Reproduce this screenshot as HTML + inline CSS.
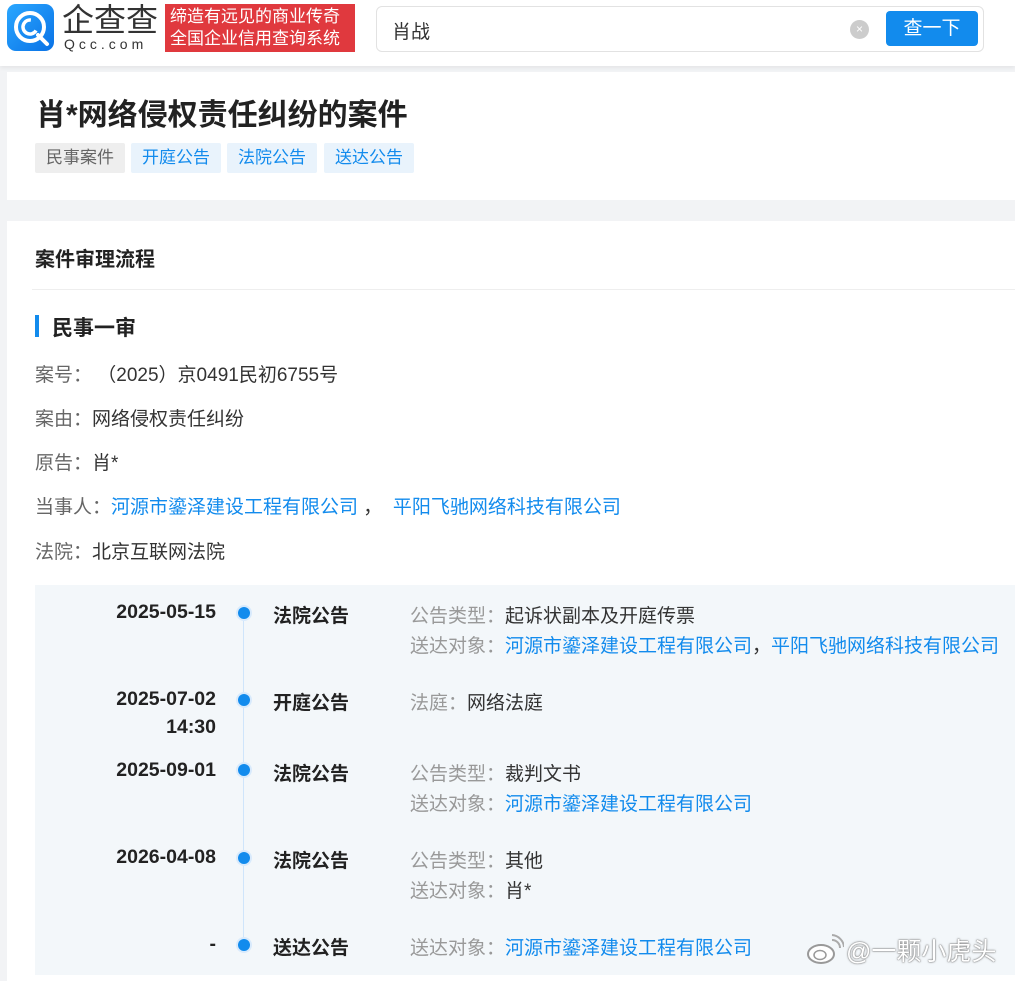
<!DOCTYPE html>
<html><head><meta charset="utf-8"><style>
*{margin:0;padding:0;box-sizing:border-box}
body{width:1015px;height:975px;overflow:hidden;background:#f2f3f5;font-family:"Liberation Sans","Noto Sans CJK SC",sans-serif;position:relative;color:#333}
.a{position:absolute;white-space:nowrap}
.hdr{left:0;top:0;width:1015px;height:66px;background:#fff;box-shadow:0 2px 4px rgba(0,0,0,.06)}
.card{background:#fff;left:7px;width:1008px}
.tag{top:143px;height:30px;line-height:30px;font-size:17px;padding:0 11px;border-radius:2px;color:#128bed;background:#e9f3fc}
.lbl{font-size:19px;color:#333}
.lbl span.k{color:#666}
.blue{color:#128bed}
.date{font-size:19.5px;font-weight:bold;color:#222;text-align:right;width:180px;left:36px}
.dot{width:12px;height:12px;border-radius:50%;background:#128bed;left:238px;box-shadow:0 0 0 2px #d8eafc}
.typ{left:273px;font-size:19px;font-weight:bold;color:#222}
.d{left:410px;font-size:19px;color:#333}
.d .k{color:#999}
</style></head><body>
<div class="a hdr"></div>
<div class="a" style="left:7px;top:4px;width:47px;height:47px;border-radius:9px;background:linear-gradient(135deg,#2aa7ff,#0a72e6)">
<svg width="47" height="47" viewBox="0 0 47 47"><circle cx="23" cy="23" r="14" fill="none" stroke="#fff" stroke-width="4"/><circle cx="23" cy="23" r="7" fill="none" stroke="#fff" stroke-width="3.5" stroke-dasharray="30 14" transform="rotate(30 23 23)"/><path d="M31 31 L40 40" stroke="#fff" stroke-width="4" stroke-linecap="round"/></svg></div>
<div class="a" style="left:62px;top:2px;font-size:32px;line-height:36px;color:#333;letter-spacing:0px">企查查</div>
<div class="a" style="left:64px;top:36px;font-size:14px;letter-spacing:4px;color:#333">Qcc.com</div>
<div class="a" style="left:165px;top:4px;width:190px;height:48px;background:#e0393e;color:#fff;font-size:17px;line-height:22px;padding:2px 0 0 5px">缔造有远见的商业传奇<br>全国企业信用查询系统</div>
<div class="a" style="left:376px;top:6px;width:608px;height:46px;border:1px solid #e2e2e2;border-radius:6px;background:#fff"></div>
<div class="a" style="left:392px;top:17px;font-size:19px;color:#333">肖战</div>
<div class="a" style="left:850px;top:20px;width:19px;height:19px;border-radius:50%;background:#ccc;color:#fff;font-size:12px;line-height:19px;text-align:center">×</div>
<div class="a" style="left:886px;top:11px;width:92px;height:35px;border-radius:4px;background:#128bed;color:#fff;font-size:19px;line-height:35px;text-align:center">查一下</div>

<div class="a card" style="top:72px;height:128px"></div>
<div class="a" style="left:36px;top:90px;font-size:30px;font-weight:bold;color:#222">肖*网络侵权责任纠纷的案件</div>
<div class="a tag" style="left:35px;color:#666;background:#eee">民事案件</div>
<div class="a tag" style="left:131px">开庭公告</div>
<div class="a tag" style="left:227px">法院公告</div>
<div class="a tag" style="left:324px">送达公告</div>

<div class="a card" style="top:221px;height:760px"></div>
<div class="a" style="left:35px;top:243px;font-size:20px;font-weight:bold;color:#222">案件审理流程</div>
<div class="a" style="left:32px;top:289px;width:983px;height:1px;background:#eee"></div>
<div class="a" style="left:35px;top:315px;width:4px;height:22px;background:#128bed"></div>
<div class="a" style="left:52px;top:312px;font-size:21px;font-weight:bold;color:#222">民事一审</div>
<div class="a lbl" style="left:35px;top:360px"><span class="k">案号：</span> （2025）京0491民初6755号</div>
<div class="a lbl" style="left:35px;top:404px"><span class="k">案由：</span>网络侵权责任纠纷</div>
<div class="a lbl" style="left:35px;top:448px"><span class="k">原告：</span>肖*</div>
<div class="a lbl" style="left:35px;top:492px"><span class="k">当事人：</span><span class="blue">河源市鎏泽建设工程有限公司</span> ，&nbsp; <span class="blue">平阳飞驰网络科技有限公司</span></div>
<div class="a lbl" style="left:35px;top:537px"><span class="k">法院：</span>北京互联网法院</div>

<div class="a" style="left:35px;top:585px;width:980px;height:390px;background:#f3f7fa"></div>
<div class="a" style="left:243px;top:612px;width:1px;height:335px;background:#cfe5fb"></div>

<div class="a date" style="top:601px">2025-05-15</div>
<div class="a dot" style="top:607px"></div>
<div class="a typ" style="top:601px">法院公告</div>
<div class="a d" style="top:601px"><span class="k">公告类型：</span>起诉状副本及开庭传票</div>
<div class="a d" style="top:631px"><span class="k">送达对象：</span><span class="blue">河源市鎏泽建设工程有限公司</span>，<span class="blue">平阳飞驰网络科技有限公司</span></div>

<div class="a date" style="top:688px">2025-07-02</div>
<div class="a date" style="top:716px">14:30</div>
<div class="a dot" style="top:694px"></div>
<div class="a typ" style="top:688px">开庭公告</div>
<div class="a d" style="top:688px"><span class="k">法庭：</span>网络法庭</div>

<div class="a date" style="top:759px">2025-09-01</div>
<div class="a dot" style="top:764px"></div>
<div class="a typ" style="top:759px">法院公告</div>
<div class="a d" style="top:759px"><span class="k">公告类型：</span>裁判文书</div>
<div class="a d" style="top:789px"><span class="k">送达对象：</span><span class="blue">河源市鎏泽建设工程有限公司</span></div>

<div class="a date" style="top:846px">2026-04-08</div>
<div class="a dot" style="top:852px"></div>
<div class="a typ" style="top:846px">法院公告</div>
<div class="a d" style="top:846px"><span class="k">公告类型：</span>其他</div>
<div class="a d" style="top:876px"><span class="k">送达对象：</span>肖*</div>

<div class="a date" style="top:933px">-</div>
<div class="a dot" style="top:939px"></div>
<div class="a typ" style="top:933px">送达公告</div>
<div class="a d" style="top:933px"><span class="k">送达对象：</span><span class="blue">河源市鎏泽建设工程有限公司</span></div>

<svg class="a" style="left:806px;top:934px" width="38" height="32" viewBox="0 0 38 32"><ellipse cx="15" cy="20" rx="13" ry="9" fill="#fff" stroke="#999" stroke-width="2"/><ellipse cx="14" cy="21" rx="6" ry="4.5" fill="none" stroke="#999" stroke-width="1.5"/><path d="M26 6a8 8 0 0 1 8 8M26 1a13 13 0 0 1 12 12" fill="none" stroke="#aaa" stroke-width="2"/></svg>
<div class="a" style="left:846px;top:932px;font-size:25px;color:#fff;text-shadow:0 0 2px #777,0 0 1px #555">@一颗小虎头</div>
</body></html>
